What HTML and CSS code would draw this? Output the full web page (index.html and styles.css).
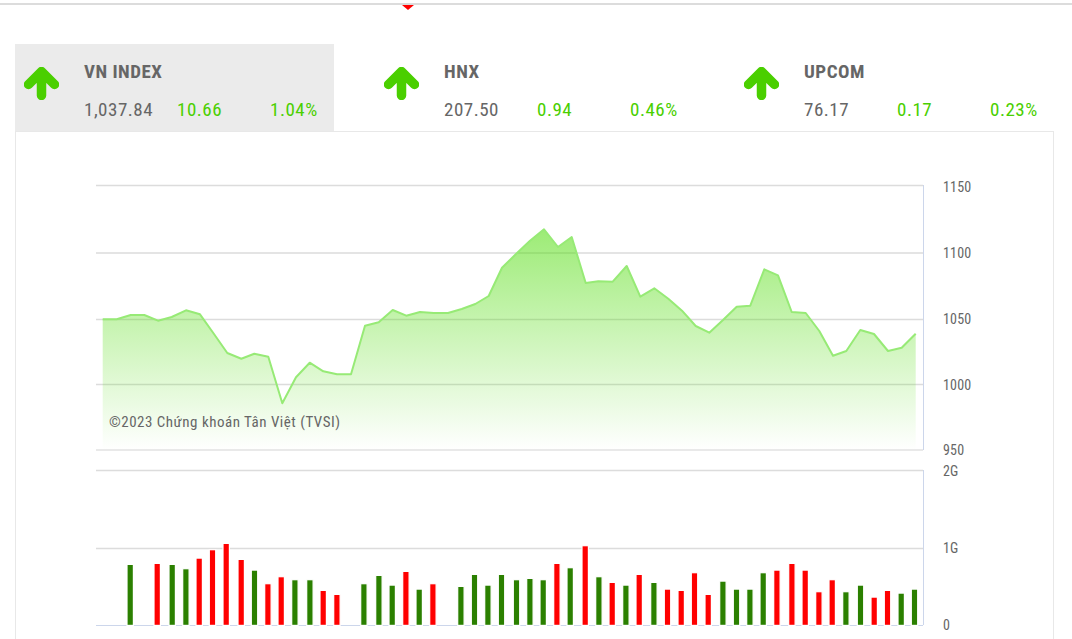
FILE: index.html
```html
<!DOCTYPE html>
<html lang="vi">
<head>
<meta charset="utf-8">
<title>VN INDEX</title>
<link rel="stylesheet" href="styles.css">
</head>
<body>
<div class="topbar"><span class="marker"></span></div>
<div class="tabs">
  <div class="tab active">
    <svg class="arrow" viewBox="0 0 35 33"><path d="M17.5 28.5V6M4.5 17.5 17.5 4.5 30.5 17.5"/></svg>
    <div class="info"><div class="name">VN INDEX</div><div class="vals"><span class="val">1,037.84</span><span class="chg">10.66</span><span class="chg">1.04%</span></div></div>
  </div>
  <div class="tab">
    <svg class="arrow" viewBox="0 0 35 33"><path d="M17.5 28.5V6M4.5 17.5 17.5 4.5 30.5 17.5"/></svg>
    <div class="info"><div class="name">HNX</div><div class="vals"><span class="val">207.50</span><span class="chg">0.94</span><span class="chg">0.46%</span></div></div>
  </div>
  <div class="tab">
    <svg class="arrow" viewBox="0 0 35 33"><path d="M17.5 28.5V6M4.5 17.5 17.5 4.5 30.5 17.5"/></svg>
    <div class="info"><div class="name">UPCOM</div><div class="vals"><span class="val">76.17</span><span class="chg">0.17</span><span class="chg">0.23%</span></div></div>
  </div>
</div>
<div class="panel">
<svg class="chart" viewBox="16 132 1037 507" width="1037" height="507">
  <defs>
    <linearGradient id="area" x1="0" y1="0" x2="0" y2="1">
      <stop offset="0" stop-color="#4fdc0a" stop-opacity=".56"/>
      <stop offset="1" stop-color="#4fdc0a" stop-opacity="0"/>
    </linearGradient>
  </defs>
  <path class="grid" d="M96 185.5H923M96 253H923M96 319.5H923M96 384.5H923"/>
  <path class="grid-end" d="M96 450H923"/>
  <path class="axis" d="M923.5 185V450"/>
  <polygon class="area" points="102.7,319.3 116.7,319.3 130.7,315 144.3,315 158,320.7 171.7,317 186,310.3 200,314.3 214,334 227.3,353 241.3,358.7 254.3,353.7 268.3,356.7 282.3,403.3 296,377.3 309.7,362.7 323.3,371.3 337,374.3 351,374.3 365,325.7 378.7,322.3 392.7,310 406.3,315.7 420,312 433.7,313 448,313 461.7,309 475.3,304 488.7,296 502,267.7 516,254 530,240.7 544,229.3 558,247 571.7,237 585.7,283 598.3,281.3 612.7,281.7 626.7,266 640.3,296.7 654.3,288.3 668.3,298.7 682,310.7 695.7,326 709.3,332.7 723,320 736.7,306.7 750.3,305.7 764.3,269.3 778,275.3 791.7,312 805.7,313 819.3,331 833,355.7 846.3,351 860.3,330 874,334 888,351 901.7,347.7 915.7,333.7 915.7,450 102.7,450"/>
  <polyline class="line" points="102.7,319.3 116.7,319.3 130.7,315 144.3,315 158,320.7 171.7,317 186,310.3 200,314.3 214,334 227.3,353 241.3,358.7 254.3,353.7 268.3,356.7 282.3,403.3 296,377.3 309.7,362.7 323.3,371.3 337,374.3 351,374.3 365,325.7 378.7,322.3 392.7,310 406.3,315.7 420,312 433.7,313 448,313 461.7,309 475.3,304 488.7,296 502,267.7 516,254 530,240.7 544,229.3 558,247 571.7,237 585.7,283 598.3,281.3 612.7,281.7 626.7,266 640.3,296.7 654.3,288.3 668.3,298.7 682,310.7 695.7,326 709.3,332.7 723,320 736.7,306.7 750.3,305.7 764.3,269.3 778,275.3 791.7,312 805.7,313 819.3,331 833,355.7 846.3,351 860.3,330 874,334 888,351 901.7,347.7 915.7,333.7"/>
  <text class="credit" x="109" y="427">©2023 Chứng khoán Tân Việt (TVSI)</text>
  <text class="tick" x="943" y="192">1150</text>
  <text class="tick" x="943" y="258">1100</text>
  <text class="tick" x="943" y="324">1050</text>
  <text class="tick" x="943" y="390">1000</text>
  <text class="tick" x="943" y="455">950</text>
  <text class="tick" x="943" y="476">2G</text>
  <text class="tick" x="943" y="553">1G</text>
  <text class="tick" x="943" y="630">0</text>
  <path class="grid" d="M96 470.5H923M96 548.5H923"/>
  <path class="axis" d="M923.5 470V625"/>
  <path class="axis" d="M96 625.5H923"/>
  <g class="bars">
    <rect class="up" x="127" y="564.4" height="61"/><rect class="down" x="154" y="563.4" height="62"/><rect class="up" x="169" y="564.4" height="61"/><rect class="up" x="182.7" y="568.7" height="56.7"/><rect class="down" x="196" y="558.1" height="67.3"/><rect class="down" x="209.3" y="549.7" height="75.7"/><rect class="down" x="223" y="543.4" height="82"/><rect class="down" x="238" y="559.4" height="66"/><rect class="up" x="251.3" y="570.1" height="55.3"/><rect class="down" x="264.7" y="583.7" height="41.7"/><rect class="down" x="278" y="576.7" height="48.7"/><rect class="up" x="291.7" y="579.7" height="45.7"/><rect class="up" x="306.7" y="579.7" height="45.7"/><rect class="down" x="320" y="590.4" height="35"/><rect class="down" x="333.7" y="594.4" height="31"/><rect class="up" x="360.7" y="583.7" height="41.7"/><rect class="up" x="375.7" y="575.4" height="50"/><rect class="up" x="389" y="585.1" height="40.3"/><rect class="down" x="402.7" y="571.4" height="54"/><rect class="up" x="416" y="589.1" height="36.3"/><rect class="down" x="429.7" y="583.7" height="41.7"/><rect class="up" x="457.7" y="586.4" height="39"/><rect class="up" x="471.3" y="574.4" height="51"/><rect class="up" x="484.7" y="585.1" height="40.3"/><rect class="up" x="498.3" y="574.4" height="51"/><rect class="up" x="513.3" y="579.7" height="45.7"/><rect class="up" x="526.7" y="578.4" height="47"/><rect class="up" x="540" y="579.7" height="45.7"/><rect class="down" x="553.7" y="563.4" height="62"/><rect class="up" x="567" y="567.7" height="57.7"/><rect class="down" x="582" y="545.7" height="79.7"/><rect class="up" x="595.7" y="576.7" height="48.7"/><rect class="down" x="609" y="582.4" height="43"/><rect class="up" x="622.7" y="585.1" height="40.3"/><rect class="down" x="636" y="574.4" height="51"/><rect class="up" x="650.7" y="582.4" height="43"/><rect class="down" x="664.3" y="589.1" height="36.3"/><rect class="down" x="678" y="590.4" height="35"/><rect class="down" x="691.3" y="572.7" height="52.7"/><rect class="down" x="705" y="594.4" height="31"/><rect class="up" x="719.7" y="581.1" height="44.3"/><rect class="up" x="733.3" y="589.1" height="36.3"/><rect class="up" x="746.7" y="589.1" height="36.3"/><rect class="up" x="760" y="572.7" height="52.7"/><rect class="down" x="773.7" y="570.1" height="55.3"/><rect class="down" x="788.7" y="563.4" height="62"/><rect class="down" x="802" y="570.1" height="55.3"/><rect class="down" x="815.7" y="591.7" height="33.7"/><rect class="down" x="829" y="579.7" height="45.7"/><rect class="up" x="842.7" y="591.7" height="33.7"/><rect class="up" x="857.3" y="585.1" height="40.3"/><rect class="down" x="871" y="597.1" height="28.3"/><rect class="down" x="884.3" y="590.4" height="35"/><rect class="up" x="898" y="593.1" height="32.3"/><rect class="up" x="911.3" y="589.1" height="36.3"/>
  </g>
</svg>
</div>
</body>
</html>
```
FILE: styles.css
```css
html, body { margin: 0; padding: 0; height: 639px; overflow: hidden; background: #fff; }
body { font-family: Roboto, "Liberation Sans", sans-serif; font-stretch: condensed; color: #666; }
.topbar { position: relative; height: 3px; border-bottom: 2px solid #dcdcdc; }
.marker { position: absolute; left: 402px; top: 5px; width: 0; height: 0; border-left: 6px solid transparent; border-right: 6px solid transparent; border-top: 5px solid #f00; }
.tabs { display: flex; gap: 41px; margin: 39px 0 0 15px; height: 87px; }
.tab { width: 319px; display: flex; padding-left: 9px; box-sizing: border-box; }
.tab.active { background: #ebebeb; }
.arrow { width: 35px; height: 33px; margin-top: 23px; flex: none; fill: none; stroke: #4acf00; stroke-width: 9.5; stroke-linecap: round; stroke-linejoin: round; }
.info { margin-left: 25px; }
.name { font-size: 19px; font-weight: 700; line-height: 22px; margin-top: 17px; letter-spacing: .5px; }
.vals { display: grid; grid-template-columns: 93px 93px 93px; margin-top: 16px; font-size: 19px; line-height: 22px; letter-spacing: .5px; }
.chg { color: #4acf00; }
.panel { margin-left: 15px; width: 1039px; height: 520px; box-sizing: border-box; border: 1px solid #e8e8e8; background: #fff; }
.chart { display: block; }
.grid { fill: none; stroke: #dcdcdc; stroke-width: 1.4; }
.grid-end { fill: none; stroke: #e2e2e2; stroke-width: 1.4; }
.axis { fill: none; stroke: #ccd6eb; stroke-width: 1; }
.area { fill: url(#area); }
.line { fill: none; stroke: #97ea76; stroke-width: 2; stroke-linejoin: round; }
.credit { font-size: 15px; fill: #666; letter-spacing: .5px; }
.tick { font-size: 14px; fill: #666; letter-spacing: .2px; }
.bars rect { width: 6.4px; stroke: #fff; stroke-width: 1.2; }
.up { fill: #2b8000; }
.down { fill: #f00; }
```
